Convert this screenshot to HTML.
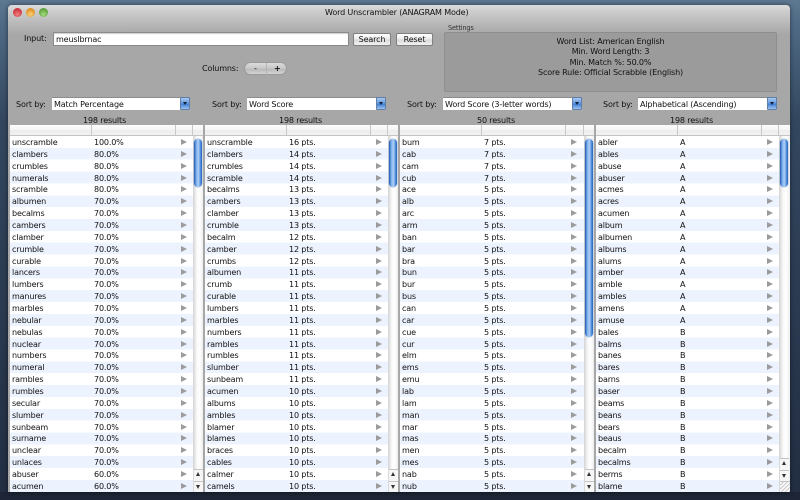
<!DOCTYPE html>
<html><head><meta charset="utf-8"><style>
html,body{margin:0;padding:0;width:800px;height:500px;overflow:hidden}
body{background:#26364c;position:relative;font-family:"DejaVu Sans","Liberation Sans",sans-serif;font-size:8.05px;letter-spacing:-.17px;color:#111}
#bg{position:absolute;left:0;top:0;width:800px;height:500px;background:linear-gradient(180deg,#5d7891 0,#4f6a85 25px,#33475f 120px,#222e42 490px)}
#bot{position:absolute;left:0;top:492px;width:800px;height:8px;background:#1d2536}
#w{position:absolute;left:8px;top:5px;width:782px;height:487px;background:#a7a7a7;border-radius:4px 4px 0 0;overflow:hidden;box-shadow:0 0 5px rgba(0,0,0,.5);filter:blur(.35px)}
#tb{position:absolute;left:0;top:0;width:782px;height:32px;background:linear-gradient(180deg,#dcdcdc 0,#cdcdcd 6px,#b9b9b9 18px,#a7a7a7 30px)}
.a{position:absolute;white-space:nowrap}
.dot{position:absolute;top:2.5px;width:9px;height:9px;border-radius:50%}
.in{background:#fff;border:1px solid #8b8b8b;box-shadow:inset 0 1px 1px #ccc;box-sizing:border-box}
.btn{position:absolute;height:13px;box-sizing:border-box;border:1px solid #7f7f7f;border-radius:2px;background:linear-gradient(180deg,#fff,#e9e9e9 50%,#d8d8d8 51%,#f2f2f2);text-align:center;line-height:11px}
.sel{position:absolute;top:92px;height:13px;background:#fff;border-top:1px solid #8c8c8c;box-sizing:border-box;line-height:14px;padding-left:2px}
.sel i{position:absolute;right:0;top:-1px;width:10px;height:13px;background:linear-gradient(180deg,#a9c8ee,#6a9ee0 45%,#3f7ed2 55%,#9cc2f0);border:1px solid #5f7fa8;box-sizing:border-box;border-radius:1px}
.sel i:after{content:"";position:absolute;left:2px;top:4px;border:2px solid transparent;border-top:3px solid #10203a}
.t{position:absolute;top:120px;height:367px;background:#fff;overflow:hidden}
.h{position:absolute;left:0;top:0;right:0;height:10px;background:linear-gradient(180deg,#fdfdfd,#f4f4f4 50%,#ececec 55%,#f3f3f3);border-bottom:1px solid #c4c4c4}
.h s{position:absolute;top:0;height:10px;width:1px;background:#c8c8c8}
.c{position:absolute;left:0;top:11px;width:183px;height:356px;background:repeating-linear-gradient(180deg,#fff 0,#fff 11.86px,#edf3fe 11.86px,#edf3fe 23.72px)}
.l{position:relative;height:11.86px;line-height:13.4px;white-space:nowrap}
.l b{font-weight:normal;position:absolute;left:2px}
.l em{font-style:normal;position:absolute;left:84px}
.l u{position:absolute;left:171px;top:3px;width:0;height:0;border:3px solid transparent;border-left:6px solid #9b9b9b;border-right:0}
.sb{position:absolute;left:183px;top:11px;width:10px;height:356px;background:linear-gradient(90deg,#dcdcdc,#f8f8f8 30%,#fff 60%,#eeeeee);box-sizing:border-box;border-left:1px solid #d8d8d8}
.th{position:absolute;left:0;top:3px;width:8px;border-radius:4px;background:linear-gradient(90deg,#1f58b0,#7fb2ee 30%,#b0d0f6 55%,#4485d8 85%,#2460b6);box-shadow:0 0 1px #1e4a90}
.ar{position:absolute;left:0;width:9px;height:12px;background:#f6f6f6;border-top:1px solid #c4c4c4;box-sizing:border-box}
.ar:after{content:"";position:absolute;left:2px;border:2.5px solid transparent}
.up{top:333px}.up:after{top:0;border-bottom:4px solid #333}
.dn{top:345px;height:11px}.dn:after{top:3px;border-top:4px solid #333}
.t4 .up{top:322px}.t4 .dn{top:334px}
.grip{position:absolute;left:0;top:345px;width:10px;height:11px;background:repeating-linear-gradient(135deg,#f6f6f6 0,#f6f6f6 2px,#bdbdbd 2px,#bdbdbd 2.8px);border-top:1px solid #c4c4c4;box-sizing:border-box}
</style></head><body>
<div id="bg"></div><div id="bot"></div>
<div id="w">
<div id="tb"></div>
<div class="dot" style="left:4.5px;background:radial-gradient(circle at 50% 70%,#f08080,#c8323a 70%)"></div>
<div class="dot" style="left:17.5px;background:radial-gradient(circle at 50% 70%,#fcd27a,#dd9020 70%)"></div>
<div class="dot" style="left:30.5px;background:radial-gradient(circle at 50% 70%,#a8dc80,#5aa038 70%)"></div>
<div class="a" style="left:317px;top:-3px;line-height:22px">Word Unscrambler (ANAGRAM Mode)</div>

<div class="a" style="left:16px;top:27px;line-height:14px">Input:</div>
<div class="a in" style="left:45px;top:27px;width:296px;height:14px;line-height:13px;padding-left:2px">meuslbrnac</div>
<div class="btn" style="left:345px;top:28px;width:38px">Search</div>
<div class="btn" style="left:388px;top:28px;width:37px">Reset</div>

<div class="a" style="left:194px;top:57px;line-height:14px">Columns:</div>
<div class="a" style="left:236px;top:57px;width:43px;height:13px;border-radius:7px;background:linear-gradient(180deg,#dcdcdc,#c6c6c6 50%,#b8b8b8 55%,#d4d4d4);border:.5px solid #9a9a9a;box-sizing:border-box;text-align:center;line-height:12px"><span style="position:absolute;left:9px">-</span><span style="position:absolute;left:29px;font-weight:bold">+</span><span style="position:absolute;left:21px;top:0;width:1px;height:12px;background:#b4b4b4"></span></div>

<div class="a" style="left:440px;top:18px;font-size:6.6px;color:#333;line-height:10px">Settings</div>
<div class="a" style="left:436px;top:27px;width:333px;height:60px;background:#9b9b9b;border:1px solid #8e8e8e;box-sizing:border-box;border-radius:2px;text-align:center;line-height:10.6px;padding-top:3.6px">Word List: American English<br>Min. Word Length: 3<br>Min. Match %: 50.0%<br>Score Rule: Official Scrabble (English)</div>

<div class="a" style="left:8px;top:93px;line-height:14px">Sort by:</div>
<div class="sel" style="left:44px;width:138px">Match Percentage<i></i></div>
<div class="a" style="left:204px;top:93px;line-height:14px">Sort by:</div>
<div class="sel" style="left:239px;width:139px">Word Score<i></i></div>
<div class="a" style="left:399px;top:93px;line-height:14px">Sort by:</div>
<div class="sel" style="left:435px;width:139px">Word Score (3-letter words)<i></i></div>
<div class="a" style="left:595px;top:93px;line-height:14px">Sort by:</div>
<div class="sel" style="left:630px;width:139px">Alphabetical (Ascending)<i></i></div>

<div class="a" style="left:75px;top:110px;line-height:11px">198 results</div>
<div class="a" style="left:271px;top:110px;line-height:11px">198 results</div>
<div class="a" style="left:469px;top:110px;line-height:11px">50 results</div>
<div class="a" style="left:662px;top:110px;line-height:11px">198 results</div>

<div class="t" style="left:2px;width:193px">
<div class="h"><s style="left:81px"></s><s style="left:165px"></s><s style="left:182px"></s></div>
<div class="c">
<div class="l"><b>unscramble</b><em>100.0%</em><u></u></div>
<div class="l"><b>clambers</b><em>80.0%</em><u></u></div>
<div class="l"><b>crumbles</b><em>80.0%</em><u></u></div>
<div class="l"><b>numerals</b><em>80.0%</em><u></u></div>
<div class="l"><b>scramble</b><em>80.0%</em><u></u></div>
<div class="l"><b>albumen</b><em>70.0%</em><u></u></div>
<div class="l"><b>becalms</b><em>70.0%</em><u></u></div>
<div class="l"><b>cambers</b><em>70.0%</em><u></u></div>
<div class="l"><b>clamber</b><em>70.0%</em><u></u></div>
<div class="l"><b>crumble</b><em>70.0%</em><u></u></div>
<div class="l"><b>curable</b><em>70.0%</em><u></u></div>
<div class="l"><b>lancers</b><em>70.0%</em><u></u></div>
<div class="l"><b>lumbers</b><em>70.0%</em><u></u></div>
<div class="l"><b>manures</b><em>70.0%</em><u></u></div>
<div class="l"><b>marbles</b><em>70.0%</em><u></u></div>
<div class="l"><b>nebular</b><em>70.0%</em><u></u></div>
<div class="l"><b>nebulas</b><em>70.0%</em><u></u></div>
<div class="l"><b>nuclear</b><em>70.0%</em><u></u></div>
<div class="l"><b>numbers</b><em>70.0%</em><u></u></div>
<div class="l"><b>numeral</b><em>70.0%</em><u></u></div>
<div class="l"><b>rambles</b><em>70.0%</em><u></u></div>
<div class="l"><b>rumbles</b><em>70.0%</em><u></u></div>
<div class="l"><b>secular</b><em>70.0%</em><u></u></div>
<div class="l"><b>slumber</b><em>70.0%</em><u></u></div>
<div class="l"><b>sunbeam</b><em>70.0%</em><u></u></div>
<div class="l"><b>surname</b><em>70.0%</em><u></u></div>
<div class="l"><b>unclear</b><em>70.0%</em><u></u></div>
<div class="l"><b>unlaces</b><em>70.0%</em><u></u></div>
<div class="l"><b>abuser</b><em>60.0%</em><u></u></div>
<div class="l"><b>acumen</b><em>60.0%</em><u></u></div>
</div>
<div class="sb"><div class="th" style="height:48px"></div><div class="ar up"></div><div class="ar dn"></div></div>
</div>

<div class="t" style="left:197px;width:193px">
<div class="h"><s style="left:81px"></s><s style="left:165px"></s><s style="left:182px"></s></div>
<div class="c">
<div class="l"><b>unscramble</b><em>16 pts.</em><u></u></div>
<div class="l"><b>clambers</b><em>14 pts.</em><u></u></div>
<div class="l"><b>crumbles</b><em>14 pts.</em><u></u></div>
<div class="l"><b>scramble</b><em>14 pts.</em><u></u></div>
<div class="l"><b>becalms</b><em>13 pts.</em><u></u></div>
<div class="l"><b>cambers</b><em>13 pts.</em><u></u></div>
<div class="l"><b>clamber</b><em>13 pts.</em><u></u></div>
<div class="l"><b>crumble</b><em>13 pts.</em><u></u></div>
<div class="l"><b>becalm</b><em>12 pts.</em><u></u></div>
<div class="l"><b>camber</b><em>12 pts.</em><u></u></div>
<div class="l"><b>crumbs</b><em>12 pts.</em><u></u></div>
<div class="l"><b>albumen</b><em>11 pts.</em><u></u></div>
<div class="l"><b>crumb</b><em>11 pts.</em><u></u></div>
<div class="l"><b>curable</b><em>11 pts.</em><u></u></div>
<div class="l"><b>lumbers</b><em>11 pts.</em><u></u></div>
<div class="l"><b>marbles</b><em>11 pts.</em><u></u></div>
<div class="l"><b>numbers</b><em>11 pts.</em><u></u></div>
<div class="l"><b>rambles</b><em>11 pts.</em><u></u></div>
<div class="l"><b>rumbles</b><em>11 pts.</em><u></u></div>
<div class="l"><b>slumber</b><em>11 pts.</em><u></u></div>
<div class="l"><b>sunbeam</b><em>11 pts.</em><u></u></div>
<div class="l"><b>acumen</b><em>10 pts.</em><u></u></div>
<div class="l"><b>albums</b><em>10 pts.</em><u></u></div>
<div class="l"><b>ambles</b><em>10 pts.</em><u></u></div>
<div class="l"><b>blamer</b><em>10 pts.</em><u></u></div>
<div class="l"><b>blames</b><em>10 pts.</em><u></u></div>
<div class="l"><b>braces</b><em>10 pts.</em><u></u></div>
<div class="l"><b>cables</b><em>10 pts.</em><u></u></div>
<div class="l"><b>calmer</b><em>10 pts.</em><u></u></div>
<div class="l"><b>camels</b><em>10 pts.</em><u></u></div>
</div>
<div class="sb"><div class="th" style="height:48px"></div><div class="ar up"></div><div class="ar dn"></div></div>
</div>

<div class="t" style="left:392px;width:194px">
<div class="h"><s style="left:81px"></s><s style="left:165px"></s><s style="left:183px"></s></div>
<div class="c" style="width:184px">
<div class="l"><b>bum</b><em>7 pts.</em><u></u></div>
<div class="l"><b>cab</b><em>7 pts.</em><u></u></div>
<div class="l"><b>cam</b><em>7 pts.</em><u></u></div>
<div class="l"><b>cub</b><em>7 pts.</em><u></u></div>
<div class="l"><b>ace</b><em>5 pts.</em><u></u></div>
<div class="l"><b>alb</b><em>5 pts.</em><u></u></div>
<div class="l"><b>arc</b><em>5 pts.</em><u></u></div>
<div class="l"><b>arm</b><em>5 pts.</em><u></u></div>
<div class="l"><b>ban</b><em>5 pts.</em><u></u></div>
<div class="l"><b>bar</b><em>5 pts.</em><u></u></div>
<div class="l"><b>bra</b><em>5 pts.</em><u></u></div>
<div class="l"><b>bun</b><em>5 pts.</em><u></u></div>
<div class="l"><b>bur</b><em>5 pts.</em><u></u></div>
<div class="l"><b>bus</b><em>5 pts.</em><u></u></div>
<div class="l"><b>can</b><em>5 pts.</em><u></u></div>
<div class="l"><b>car</b><em>5 pts.</em><u></u></div>
<div class="l"><b>cue</b><em>5 pts.</em><u></u></div>
<div class="l"><b>cur</b><em>5 pts.</em><u></u></div>
<div class="l"><b>elm</b><em>5 pts.</em><u></u></div>
<div class="l"><b>ems</b><em>5 pts.</em><u></u></div>
<div class="l"><b>emu</b><em>5 pts.</em><u></u></div>
<div class="l"><b>lab</b><em>5 pts.</em><u></u></div>
<div class="l"><b>lam</b><em>5 pts.</em><u></u></div>
<div class="l"><b>man</b><em>5 pts.</em><u></u></div>
<div class="l"><b>mar</b><em>5 pts.</em><u></u></div>
<div class="l"><b>mas</b><em>5 pts.</em><u></u></div>
<div class="l"><b>men</b><em>5 pts.</em><u></u></div>
<div class="l"><b>mes</b><em>5 pts.</em><u></u></div>
<div class="l"><b>nab</b><em>5 pts.</em><u></u></div>
<div class="l"><b>nub</b><em>5 pts.</em><u></u></div>
</div>
<div class="sb" style="left:184px"><div class="th" style="height:198px"></div><div class="ar up"></div><div class="ar dn"></div></div>
</div>

<div class="t t4" style="left:588px;width:194px">
<div class="h"><s style="left:81px"></s><s style="left:165px"></s><s style="left:182px"></s></div>
<div class="c">
<div class="l"><b>abler</b><em>A</em><u></u></div>
<div class="l"><b>ables</b><em>A</em><u></u></div>
<div class="l"><b>abuse</b><em>A</em><u></u></div>
<div class="l"><b>abuser</b><em>A</em><u></u></div>
<div class="l"><b>acmes</b><em>A</em><u></u></div>
<div class="l"><b>acres</b><em>A</em><u></u></div>
<div class="l"><b>acumen</b><em>A</em><u></u></div>
<div class="l"><b>album</b><em>A</em><u></u></div>
<div class="l"><b>albumen</b><em>A</em><u></u></div>
<div class="l"><b>albums</b><em>A</em><u></u></div>
<div class="l"><b>alums</b><em>A</em><u></u></div>
<div class="l"><b>amber</b><em>A</em><u></u></div>
<div class="l"><b>amble</b><em>A</em><u></u></div>
<div class="l"><b>ambles</b><em>A</em><u></u></div>
<div class="l"><b>amens</b><em>A</em><u></u></div>
<div class="l"><b>amuse</b><em>A</em><u></u></div>
<div class="l"><b>bales</b><em>B</em><u></u></div>
<div class="l"><b>balms</b><em>B</em><u></u></div>
<div class="l"><b>banes</b><em>B</em><u></u></div>
<div class="l"><b>bares</b><em>B</em><u></u></div>
<div class="l"><b>barns</b><em>B</em><u></u></div>
<div class="l"><b>baser</b><em>B</em><u></u></div>
<div class="l"><b>beams</b><em>B</em><u></u></div>
<div class="l"><b>beans</b><em>B</em><u></u></div>
<div class="l"><b>bears</b><em>B</em><u></u></div>
<div class="l"><b>beaus</b><em>B</em><u></u></div>
<div class="l"><b>becalm</b><em>B</em><u></u></div>
<div class="l"><b>becalms</b><em>B</em><u></u></div>
<div class="l"><b>berms</b><em>B</em><u></u></div>
<div class="l"><b>blame</b><em>B</em><u></u></div>
</div>
<div class="sb" style="width:11px"><div class="th" style="height:48px"></div><div class="ar up"></div><div class="ar dn"></div><div class="grip"></div></div>
</div>
</div>
</body></html>
